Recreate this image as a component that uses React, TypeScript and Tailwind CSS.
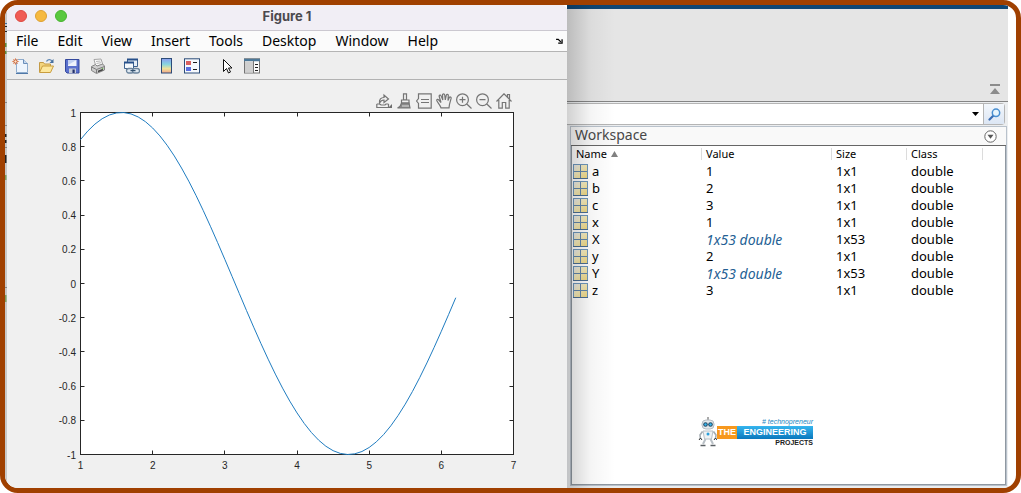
import React, { useState } from "react";

const menus = ["File", "Edit", "View", "Insert", "Tools", "Desktop", "Window", "Help"];

const variables = [
    { name: "a", value: "1", size: "1x1" },
    { name: "b", value: "2", size: "1x1" },
    { name: "c", value: "3", size: "1x1" },
    { name: "x", value: "1", size: "1x1" },
    { name: "X", value: "1x53 double", size: "1x53" },
    { name: "y", value: "2", size: "1x1" },
    { name: "Y", value: "1x53 double", size: "1x53" },
    { name: "z", value: "3", size: "1x1" },
];

function Icon({ children }: { children: React.ReactNode }) {
    return (
        <svg width="16" height="16" viewBox="0 0 16 16" fill="none" aria-hidden="true">
            {children}
        </svg>
    );
}

const toolGroups = [
    [
        {
            label: "New Figure",
            icon: (
                <Icon>
                    <path d="M4.5 1.5h7l4 4v9h-11z" fill="#eef5fd" stroke="#8faccc" />
                    <path d="M11.5 1.5v4h4" fill="#c5d8ee" stroke="#6b8fba" />
                    <path d="M4 15.500h12" stroke="#4f78a8" />
                    <path d="M3.500 0v7M0 3.500h7M1 1l5 5M6 1L1 6" stroke="#e5a884" strokeWidth="1" />
                    <circle cx="3.500" cy="3.500" r="1.700" fill="#fbe9c8" stroke="#c9532b" />
                </Icon>
            ),
        },
        {
            label: "Open File",
            icon: (
                <Icon>
                    <path d="M1.500 14V4.500h4l1 1.500h6v3" fill="#f4d57e" stroke="#c39a45" />
                    <path d="M1.500 14.500L4.500 8h11l-3 6.500z" fill="#fde79c" stroke="#c99d3e" />
                    <path d="M8.500 3.500c1-2.500 4-2.500 5.500-.5" stroke="#5e86b3" strokeWidth="1.300" />
                    <path d="M15.500 1v4h-4z" fill="#46709f" />
                </Icon>
            ),
        },
        {
            label: "Save Figure",
            icon: (
                <Icon>
                    <path d="M1.500 1.500h13.500v13.500H3l-1.500-1.500z" fill="#5a70cd" stroke="#34489c" />
                    <path d="M4 2h8.500v6H4z" fill="#eff3fc" />
                    <path d="M4 2h8.500L4 7z" fill="#c3d1f2" />
                    <path d="M5 10.500h7V15H5z" fill="#c5cbd8" />
                    <path d="M8.500 11.500h2.200V15H8.500z" fill="#24326e" />
                </Icon>
            ),
        },
        {
            label: "Print Figure",
            icon: (
                <Icon>
                    <path d="M4 1.500l7-.5 2 6-7 2z" fill="#fbfbfb" stroke="#a5a5a5" />
                    <path d="M6 3.500l4.500-.5M6.500 5.500l4.500-.8" stroke="#b8b8b8" />
                    <path d="M1.500 8.500l4-2 1.500 1.500 5.500-2 2 2v4l-8 3.500-5-3z" fill="#cfcfcf" stroke="#868686" />
                    <path d="M1.500 9l5 2.500 8-3M6.500 11.500V15" stroke="#7c7c7c" />
                    <path d="M8 13.500l5-2" stroke="#444" strokeWidth="1.400" />
                    <circle cx="12.500" cy="10.500" r=".8" fill="#73b65a" />
                </Icon>
            ),
        },
    ],
    [
        {
            label: "Link Axes",
            icon: (
                <Icon>
                    <path d="M3.500 1.500h10v7h-10z" fill="#e6eef7" stroke="#3c618f" />
                    <path d="M3 1.500h11" stroke="#27508a" strokeWidth="2" />
                    <path d="M.5 4.500h9v6h-9z" fill="#f4f8fc" stroke="#3c618f" />
                    <path d="M0 4.500h10" stroke="#27508a" strokeWidth="2" />
                    <rect x="2.500" y="10.500" width="7" height="4.500" rx="2.200" fill="#dfe9f2" stroke="#6b849d" strokeWidth="1.300" />
                    <rect x="8.500" y="10.500" width="7" height="4.500" rx="2.200" fill="#dfe9f2" stroke="#6b849d" strokeWidth="1.300" />
                    <path d="M6.500 12.700h5" stroke="#33516f" strokeWidth="1.300" />
                </Icon>
            ),
        },
    ],
    [
        {
            label: "Insert Colorbar",
            icon: (
                <Icon>
                    <defs>
                        <linearGradient id="colorbar" x1="0" y1="0" x2="0" y2="1">
                            <stop offset="0" stopColor="#8c9cf0" />
                            <stop offset=".4" stopColor="#86d5df" />
                            <stop offset=".7" stopColor="#f0e29a" />
                            <stop offset="1" stopColor="#f1a488" />
                        </linearGradient>
                    </defs>
                    <rect x="3.500" y=".5" width="10" height="14.500" fill="url(#colorbar)" stroke="#2d4c78" />
                </Icon>
            ),
        },
        {
            label: "Insert Legend",
            icon: (
                <Icon>
                    <rect x=".5" y=".8" width="15" height="14.200" fill="#f6f9fd" stroke="#2d4c78" />
                    <rect x="2" y="3" width="5" height="4" fill="#d9605f" />
                    <rect x="2" y="9" width="5" height="4" fill="#5a6fe0" />
                    <path d="M9 4.500h4M9 11.500h4" stroke="#1b1b1b" />
                </Icon>
            ),
        },
    ],
    [
        {
            label: "Edit Plot",
            icon: (
                <Icon>
                    <path d="M5.500 1.500v12l3-3 2 4.500 2-1-2-4h3.500z" fill="#fff" stroke="#111" />
                </Icon>
            ),
        },
        {
            label: "Open Property Inspector",
            icon: (
                <Icon>
                    <rect x=".5" y=".8" width="15" height="14.200" fill="#fbfbfb" stroke="#737373" />
                    <path d="M0 2h16" stroke="#4d7898" strokeWidth="2.500" />
                    <path d="M1 3.500h8v11H1z" fill="#cfcfcf" />
                    <path d="M9.500 3v12" stroke="#777" />
                    <path d="M11 6.500h3M11 9.500h3M11 12.500h3" stroke="#222" />
                </Icon>
            ),
        },
    ],
];

const axesTools = [
    {
        label: "Export",
        icon: (
            <>
                <path d="M.8 11v3.500h11.700V11M.8 11h3l1.200 1h4l1-1h2.500" />
                <path d="M3.500 10C3 6.500 5 4.500 8 4.500V2l4.500 4L8 9.500V7C6 7 4.500 8 3.500 10z" />
                <path d="M16 11v4h-4z" fill="#6e6e6e" stroke="none" />
            </>
        ),
    },
    {
        label: "Brush",
        icon: (
            <>
                <path d="M7.500.8h3v6h-3zM5.500 7h7.500v3.200H5.500z" />
                <path d="M5.500 10.200h7.500l1 4.800H1.500c2.500-1 3.500-2.500 4-4.800z" fill="#8b8b8b" />
                <path d="M6 13h7" stroke="#ddd" />
            </>
        ),
    },
    {
        label: "Data Tips",
        icon: <path d="M2.500.8h12.700v14.400H2.500V10.500L.5 8l2-2.500zM5 6.500h8M5 9.500h8" />,
    },
    {
        label: "Pan",
        icon: (
            <path d="M5 14.800C4.500 12.500 1.500 9.500.8 7.500.5 6.300 2 6 2.800 7L5 9.500 3.200 3.500c-.3-1.500 1.400-2 1.900-.6L6.800 7 6.500 2c0-1.500 2-1.500 2.200 0L9.300 7l1-4.800c.4-1.400 2.200-1 2 .4L12 7.500l1.200-2.800c.7-1.300 2.200-.6 1.900.7l-1.600 6-.5 3.400z" />
        ),
    },
    {
        label: "Zoom In",
        icon: <path d="M6.500.8a5.900 5.900 0 1 0 0 11.800 5.900 5.900 0 0 0 0-11.800zM10.800 11l4.700 4.500M3.500 6.700h6M6.500 3.700v6" />,
    },
    {
        label: "Zoom Out",
        icon: <path d="M6.500.8a5.900 5.900 0 1 0 0 11.800 5.900 5.900 0 0 0 0-11.800zM10.800 11l4.700 4.500M3.500 6.700h6" />,
    },
    {
        label: "Restore View",
        icon: <path d="M.5 8.500L8 .8l7.500 7.700M11.500 4V1.500h2V6M2.800 7v8.200h3.500V9.500h3.400v5.700h3.500V7" />,
    },
];

// plot area inside the figure canvas
const LEFT = 73.5;
const TOP = 3.5;
const WIDTH = 433;
const HEIGHT = 342;

const toX = (x: number) => LEFT + ((x - 1) / 6) * WIDTH;
const toY = (y: number) => TOP + ((1 - y) / 2) * HEIGHT;

const xTicks = [1, 2, 3, 4, 5, 6, 7];
const yTicks = [1, 0.8, 0.6, 0.4, 0.2, 0, -0.2, -0.4, -0.6, -0.8, -1];

const points = Array.from({ length: 53 }, (_, i) => {
    const x = 1 + i * 0.1;
    return `${toX(x).toFixed(2)},${toY(Math.sin(x)).toFixed(2)}`;
}).join(" ");

function Plot() {
    return (
        <svg viewBox="0 0 560 379" className="block w-full overflow-visible" role="img" aria-label="Sine plot">
            <rect x={LEFT} y={TOP} width={WIDTH} height={HEIGHT} fill="#fff" stroke="#262626" />
            <g stroke="#262626">
                {xTicks.map((t) => (
                    <path key={t} d={`M${Math.floor(toX(t)) + 0.5} ${TOP}v4M${Math.floor(toX(t)) + 0.5} ${TOP + HEIGHT}v-4`} />
                ))}
                {yTicks.map((t) => (
                    <path key={t} d={`M${LEFT} ${Math.floor(toY(t)) + 0.5}h4M${LEFT + WIDTH} ${Math.floor(toY(t)) + 0.5}h-4`} />
                ))}
            </g>
            <polyline points={points} fill="none" stroke="#1f7cc0" />
            <g fill="#262626" fontSize="10" fontFamily="'Liberation Sans', sans-serif">
                {xTicks.map((t) => (
                    <text key={t} x={toX(t)} y="360" textAnchor="middle">{t}</text>
                ))}
                {yTicks.map((t) => (
                    <text key={t} x="69" y={toY(t) + 4} textAnchor="end">{t}</text>
                ))}
            </g>
        </svg>
    );
}

function FigureWindow() {
    return (
        <section className="flex min-w-0 flex-col overflow-hidden rounded-tr-md bg-[#f0f0f0]">
            <header className="relative flex h-[26px] items-center justify-center border-b border-[#cbc8d0] bg-[#f1eef5] pb-1">
                <div className="absolute left-2 top-[5px] flex gap-2">
                    <button aria-label="Close" className="size-3 rounded-full border border-[#dd4a42] bg-[#f05b54]" />
                    <button aria-label="Minimize" className="size-3 rounded-full border border-[#dda032] bg-[#f6b940]" />
                    <button aria-label="Zoom" className="size-3 rounded-full border border-[#48b330] bg-[#59c83f]" />
                </div>
                <h1 className="font-[Inter,sans-serif] text-[13px] leading-4 font-bold text-[#4b494e]">Figure 1</h1>
            </header>

            <nav className="flex h-[21px] items-center gap-[19px] border-b border-[#b4b4b4] bg-[#fbfbfb] pl-[9px] pr-1 text-sm leading-5 text-black">
                {menus.map((menu) => (
                    <button key={menu}>{menu}</button>
                ))}
                <button aria-label="Dock" className="ml-auto">
                    <svg width="7" height="6" viewBox="0 0 8 7" aria-hidden="true">
                        <path d="M0 1.500h2.500l3 3M7 1.500V6H2.500" fill="none" stroke="#000" strokeWidth="1.500" />
                    </svg>
                </button>
            </nav>

            <div className="flex h-7 items-center gap-[18px] border-b border-[#b2b2b2] bg-[#eee] pl-[5px]">
                {toolGroups.map((group, i) => (
                    <div key={i} className="flex gap-[10px]">
                        {group.map((tool) => (
                            <button key={tool.label} aria-label={tool.label}>{tool.icon}</button>
                        ))}
                    </div>
                ))}
            </div>

            <div className="flex-1">
                <div className="flex h-[29px] items-end justify-end gap-1 pr-[55px]">
                    {axesTools.map((tool) => (
                        <button key={tool.label} aria-label={tool.label}>
                            <svg width="16" height="16" viewBox="0 0 16 16" fill="none" stroke="#757575" strokeWidth="1.200" aria-hidden="true">
                                {tool.icon}
                            </svg>
                        </button>
                    ))}
                </div>
                <Plot />
            </div>
        </section>
    );
}

function MatrixIcon() {
    return (
        <svg width="15" height="15" viewBox="0 0 15 15" aria-hidden="true">
            <defs>
                <linearGradient id="cell" x1="0" y1="0" x2="1" y2="1">
                    <stop offset="0" stopColor="#e8ebf2" />
                    <stop offset=".45" stopColor="#f6ecbc" />
                    <stop offset="1" stopColor="#f0d67a" />
                </linearGradient>
            </defs>
            <rect x=".5" y=".5" width="14" height="14" fill="url(#cell)" stroke="#6f98bd" />
            <path d="M7.500 1v13M1 7.500h13" stroke="#6388ac" />
            <path d="M0 14.500h15" stroke="#4c6f94" />
        </svg>
    );
}

function Logo() {
    return (
        <div className="flex w-[115px] items-end">
            <svg width="19" height="30" viewBox="0 0 19 30" className="shrink-0" aria-hidden="true">
                <path d="M10 0v4" stroke="#555" />
                <rect x="4" y="3" width="12" height="9" rx="4" fill="#e4e9ec" stroke="#b4bcc2" />
                <circle cx="7.500" cy="7.500" r="2.300" fill="#234a66" />
                <circle cx="12.500" cy="7.500" r="2.300" fill="#234a66" />
                <circle cx="7.500" cy="7.500" r="1.200" fill="#37b8ef" />
                <circle cx="12.500" cy="7.500" r="1.200" fill="#37b8ef" />
                <path d="M5 14h10l-1.500 8h-7z" fill="#eef1f3" stroke="#b9c0c6" />
                <circle cx="10" cy="17" r="1.500" fill="#2b9fdb" />
                <path d="M4.500 14.500L2 18l.5 4M15.500 14.500L18 18l-.5 4" fill="none" stroke="#a5adb3" strokeWidth="1.600" />
                <path d="M1 23l1.500-2L4 23M16 23l1.500-2 1.500 2" fill="none" stroke="#333" />
                <path d="M7.500 22L5 27M12.500 22l2.500 5" stroke="#b9c0c6" strokeWidth="2" />
                <path d="M2.500 28.500h5M12.500 28.500h5" stroke="#5b6165" strokeWidth="1.500" />
            </svg>
            <div className="flex flex-1 flex-col items-end font-['Liberation_Sans',sans-serif]">
                <p className="text-[7px] leading-[8px] text-[#2187c2] italic"># technopreneur</p>
                <p className="flex w-full text-[9px] leading-[13px] font-bold text-white">
                    <span className="bg-[#f7981d] px-px">THE</span>
                    <span className="flex-1 bg-linear-to-b from-[#35b5ee] to-[#0878bd] text-center">ENGINEERING</span>
                </p>
                <p className="text-[7px] leading-[8px] font-bold text-[#222]">PROJECTS</p>
            </div>
        </div>
    );
}

function Workspace() {
    return (
        <section className="flex flex-1 flex-col border border-[#b9c2cc] bg-white">
            <header className="flex h-[19px] items-center justify-between border-b border-[#666] bg-[#f9f9f9] pl-1 pr-[9px]">
                <h2 className="pb-[2px] text-sm leading-4 text-[#484848]">Workspace</h2>
                <button aria-label="Workspace actions">
                    <svg width="13" height="13" viewBox="0 0 13 13" aria-hidden="true">
                        <circle cx="6.500" cy="6.500" r="5.700" fill="#fff" stroke="#666" />
                        <path d="M3.500 4.800h6l-3 4z" fill="#555" />
                    </svg>
                </button>
            </header>
            <div className="flex flex-1 flex-col border-x border-b border-[#8f98a1]">
                <table className="w-full table-fixed border-collapse text-left text-[13px] leading-[17px] text-black">
                    <colgroup>
                        <col className="w-[130px]" />
                        <col className="w-[130px]" />
                        <col className="w-[75px]" />
                        <col />
                    </colgroup>
                    <thead>
                        <tr className="h-[17px] text-[11px]">
                            <th className="px-0 pt-0 pb-[2px] font-normal">
                                <div className="flex h-3 items-center gap-1 border-r border-[#dcdcdc] pl-1">
                                    Name
                                    <svg width="7" height="6" viewBox="0 0 7 6" aria-hidden="true">
                                        <path d="M0 6L3.500 0 7 6z" fill="#808080" />
                                    </svg>
                                </div>
                            </th>
                            <th className="px-0 pt-0 pb-[2px] font-normal">
                                <div className="flex h-3 items-center border-r border-[#dcdcdc] pl-1">Value</div>
                            </th>
                            <th className="px-0 pt-0 pb-[2px] font-normal">
                                <div className="flex h-3 items-center border-r border-[#dcdcdc] pl-1">Size</div>
                            </th>
                            <th className="px-0 pt-0 pb-[2px] font-normal">
                                <div className="flex h-3 w-[76px] items-center border-r border-[#dcdcdc] pl-1">Class</div>
                            </th>
                        </tr>
                    </thead>
                    <tbody>
                        {variables.map((v) => (
                            <tr key={v.name} className="h-[17px]">
                                <td className="p-0">
                                    <div className="flex items-center gap-1 pl-px">
                                        <MatrixIcon />
                                        {v.name}
                                    </div>
                                </td>
                                <td className={v.value.includes("double") ? "p-0 pl-1 text-[14px] leading-[17px] italic text-[#245f94]" : "p-0 pl-1"}>
                                    {v.value}
                                </td>
                                <td className="p-0 pl-1">{v.size}</td>
                                <td className="p-0 pl-1">double</td>
                            </tr>
                        ))}
                    </tbody>
                </table>
                <div className="mt-auto pb-[37px] pl-[126px]">
                    <Logo />
                </div>
            </div>
        </section>
    );
}

function DesktopPane() {
    const [folder, setFolder] = useState("");

    return (
        <div className="relative flex min-w-0 flex-col bg-[#eceef0]">
            <div className="h-1 bg-[#0e4674]" />
            <div className="flex h-[93px] items-end justify-end border-b border-[#858585] bg-[#e5e5e5] pb-[7px] pr-2">
                <button aria-label="Minimize toolstrip">
                    <svg width="10" height="10" viewBox="0 0 10 10" aria-hidden="true">
                        <path d="M0 0h10v2H0zM5 4l5 6H0z" fill="#8c8c8c" />
                    </svg>
                </button>
            </div>
            <div className="mt-px mr-[3px] flex h-[22px] rounded-r-sm border border-l-0 border-[#b5b5b5] bg-white">
                <input
                    aria-label="Current folder"
                    value={folder}
                    onChange={(e) => setFolder(e.target.value)}
                    className="min-w-0 flex-1 bg-transparent px-2 text-xs outline-none"
                />
                <button aria-label="Show folders" className="px-1">
                    <svg width="7" height="4" viewBox="0 0 7 4" aria-hidden="true">
                        <path d="M0 0h7L3.500 4z" fill="#000" />
                    </svg>
                </button>
                <button
                    aria-label="Search"
                    className="flex w-[21px] items-center justify-center border-l border-[#b5b5b5] bg-linear-to-b from-[#f3f7fc] to-[#dce6f4]"
                >
                    <svg width="13" height="13" viewBox="0 0 13 13" fill="none" aria-hidden="true">
                        <path d="M5 8L1.500 11.500" stroke="#3a6db3" strokeWidth="2.200" strokeLinecap="round" />
                        <circle cx="8" cy="4.800" r="3.700" fill="#e8f5fd" stroke="#4a8fd0" strokeWidth="1.500" />
                    </svg>
                </button>
            </div>
            <div className="flex flex-1 pb-[2px] pl-[3px] pr-px pt-px">
                <Workspace />
            </div>
            {/* shadow cast by the figure window */}
            <div className="pointer-events-none absolute inset-y-0 left-0 w-12 bg-linear-to-r from-black/18 via-black/4 to-transparent" />
        </div>
    );
}

// sliver of the editor that shows to the left of the figure window
function EditorEdge() {
    return (
        <svg width="2" height="320" viewBox="0 0 2 320" aria-hidden="true">
            <path d="M0 18.500h2" stroke="#3b6ea0" />
            <path d="M0 21.500h2M0 26.500h2" stroke="#222" />
            <path d="M0 38v4M0 46v3" stroke="#5d8a3c" strokeWidth="3" />
            <path d="M0 97.500h2M0 120.500h2M0 142.500h2M0 282.500h2" stroke="#888" />
            <path d="M0 129v3M0 135v3M0 150v8" stroke="#222" strokeWidth="3" />
            <path d="M0 170v5M0 290v7" stroke="#7da05e" strokeWidth="3" />
        </svg>
    );
}

function App() {
    return (
        <div className="flex min-h-screen overflow-hidden rounded-[18px] border-[5px] border-[#a04000] bg-white pr-2 font-['Noto_Sans',sans-serif]">
            <div className="w-[2px] shrink-0 bg-[#c8c8c8]">
                <EditorEdge />
            </div>
            <main className="grid min-w-0 flex-1 grid-cols-[560fr_441fr]">
                <FigureWindow />
                <DesktopPane />
            </main>
        </div>
    );
}

export default App;
